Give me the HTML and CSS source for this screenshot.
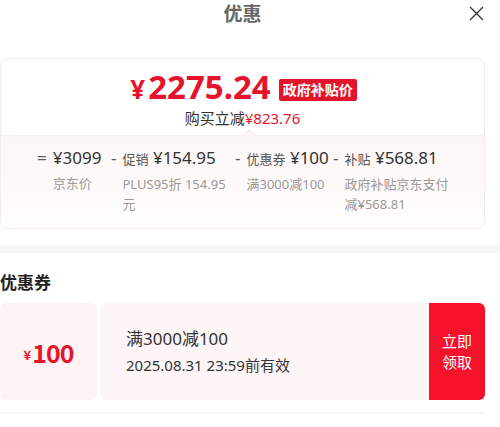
FILE: index.html
```html
<html>
<head>
<meta charset="utf-8">
<title>优惠</title>
<link rel="stylesheet" href="styles.css">
</head>
<body>
<div class="header">
    <h2 class="title">优惠</h2>
    <span class="close">
        <svg width="15" height="15" viewBox="0 0 15 15"><path d="M1 1 L14 14 M14 1 L1 14" stroke="#333" stroke-width="1.3" fill="none"/></svg>
    </span>
</div>

<div class="panel">
    <div class="summary">
        <div class="summary-top">
            <div class="price-line">
                <span class="price"><span class="yen">¥</span>2275.24</span>
                <span class="badge">政府补贴价</span>
            </div>
            <div class="saving">购买立减<span class="red">¥823.76</span></div>
        </div>
        <div class="summary-bottom">
            <div class="calc">
                <div class="calc-item col1">
                    <span class="sign">=</span>
                    <div class="calc-body">
                        <div class="amount">¥3099</div>
                        <div class="note">京东价</div>
                    </div>
                </div>
                <div class="calc-item col2">
                    <span class="sign">-</span>
                    <div class="calc-body">
                        <div class="amount"><span class="label">促销</span> ¥154.95</div>
                        <div class="note">PLUS95折 154.95元</div>
                    </div>
                </div>
                <div class="calc-item col3">
                    <span class="sign">-</span>
                    <div class="calc-body">
                        <div class="amount"><span class="label">优惠券</span> ¥100</div>
                        <div class="note">满3000减100</div>
                    </div>
                </div>
                <div class="calc-item col4">
                    <span class="sign">-</span>
                    <div class="calc-body">
                        <div class="amount"><span class="label">补贴</span> ¥568.81</div>
                        <div class="note">政府补贴京东支付减¥568.81</div>
                    </div>
                </div>
            </div>
        </div>
    </div>
</div>

<div class="divider"></div>

<div class="panel">
    <h3 class="section-title">优惠券</h3>
    <div class="coupon">
        <div class="coupon-value"><span class="small-yen">¥</span>100</div>
        <div class="coupon-info">
            <div class="coupon-rule">满3000减100</div>
            <div class="coupon-date">2025.08.31 23:59前有效</div>
        </div>
        <div class="coupon-btn">立即<br>领取</div>
    </div>
</div>
<div class="bottom-line"></div>
</body>
</html>
```

FILE: styles.css
```css
body {
    margin: 0;
    padding: 0;
    background: #fff;
    color: #333;
    font-family: "Noto Sans", "Noto Sans CJK SC", sans-serif;
}

.header {
    position: relative;
    height: 28px;
    display: flex;
    justify-content: center;
    align-items: center;
}

.title {
    margin: 0 0 0 -15px;
    font-size: 19px;
    font-weight: bold;
    color: #666;
    line-height: 28px;
}

.close {
    position: absolute;
    right: 16px;
    top: 6px;
    width: 15px;
    height: 15px;
}

.panel {
    padding-right: 15px;
}

.summary {
    margin-top: 30px;
    border: 1px solid #f2ecec;
    border-radius: 8px;
    overflow: hidden;
}

.summary-top {
    height: 76px;
    background: #fff;
    display: flex;
    flex-direction: column;
    align-items: center;
    box-sizing: border-box;
    padding-top: 10px;
}

.price-line {
    display: flex;
    align-items: center;
    height: 38px;
    margin-left: 2px;
}

.price {
    color: #e5142d;
    font-size: 33px;
    font-weight: bold;
    line-height: 38px;
}

.yen {
    font-size: 26px;
    margin-right: 3px;
}

.badge {
    background: #e5142d;
    color: #fff;
    font-size: 14px;
    font-weight: bold;
    line-height: 22px;
    padding: 0 4px;
    border-radius: 2px;
    margin-left: 8px;
    margin-top: 3px;
}

.red {
    color: #e5142d;
}

.saving {
    font-size: 15px;
    line-height: 20px;
    color: #333;
    margin-top: 1px;
}

.summary-bottom {
    position: relative;
    height: 93px;
    box-sizing: border-box;
    padding: 11px 0 0 36px;
    background: linear-gradient(180deg, #fdf6f6 0%, #fffdfd 100%);
    border-top: 1px solid #f7efef;
}

.summary-bottom::before {
    content: "";
    position: absolute;
    left: 244px;
    top: -5px;
    width: 8px;
    height: 8px;
    background: #fdf6f6;
    border-left: 1px solid #f3eaea;
    border-top: 1px solid #f3eaea;
    transform: rotate(45deg);
}

.calc {
    display: flex;
}

.calc-item {
    display: flex;
    align-items: flex-start;
}

.col1 { width: 74px; }
.col2 { width: 124px; }
.col3 { width: 98px; }
.col4 { width: 120px; }

.sign {
    font-size: 17px;
    line-height: 22px;
    color: #555;
    margin-right: 6px;
}

.calc-body {
    flex: 1;
}

.amount {
    font-size: 17px;
    line-height: 22px;
    color: #333;
    white-space: nowrap;
}

.label {
    font-size: 13px;
    color: #555;
}

.note {
    margin-top: 4px;
    font-size: 13px;
    line-height: 20px;
    color: #999;
}

.divider {
    margin-top: 16px;
    height: 8px;
    background: #f5f6f8;
}

.section-title {
    margin: 0;
    padding-top: 19px;
    font-size: 17px;
    line-height: 22px;
    font-weight: bold;
    color: #222;
}

.coupon {
    margin-top: 9px;
    height: 97px;
    display: flex;
    gap: 3px;
}

.coupon-value {
    width: 97px;
    background: #fdf3f4;
    border-radius: 6px;
    display: flex;
    align-items: center;
    justify-content: center;
    color: #e5142d;
    font-family: "Noto Sans CJK SC", sans-serif;
    font-size: 25px;
    font-weight: bold;
    letter-spacing: -1px;
}

.small-yen {
    font-size: 13px;
    margin-right: 2px;
    margin-top: 6px;
}

.coupon-info {
    flex: 1;
    background: #fdf5f6;
    border-radius: 6px 0 0 6px;
    padding-left: 26px;
    display: flex;
    flex-direction: column;
    justify-content: center;
}

.coupon-rule {
    font-size: 17px;
    line-height: 24px;
    color: #333;
}

.coupon-date {
    font-size: 15px;
    line-height: 22px;
    color: #333;
    margin-top: 3px;
}

.coupon-btn {
    width: 56px;
    margin-left: -3px;
    background: #f5122a;
    color: #fff;
    border-radius: 0 6px 6px 0;
    display: flex;
    align-items: center;
    justify-content: center;
    text-align: center;
    font-size: 15px;
    line-height: 21px;
}

.bottom-line {
    margin-top: 12px;
    height: 2px;
    background: #f7f7f7;
    margin-right: 15px;
}
```
